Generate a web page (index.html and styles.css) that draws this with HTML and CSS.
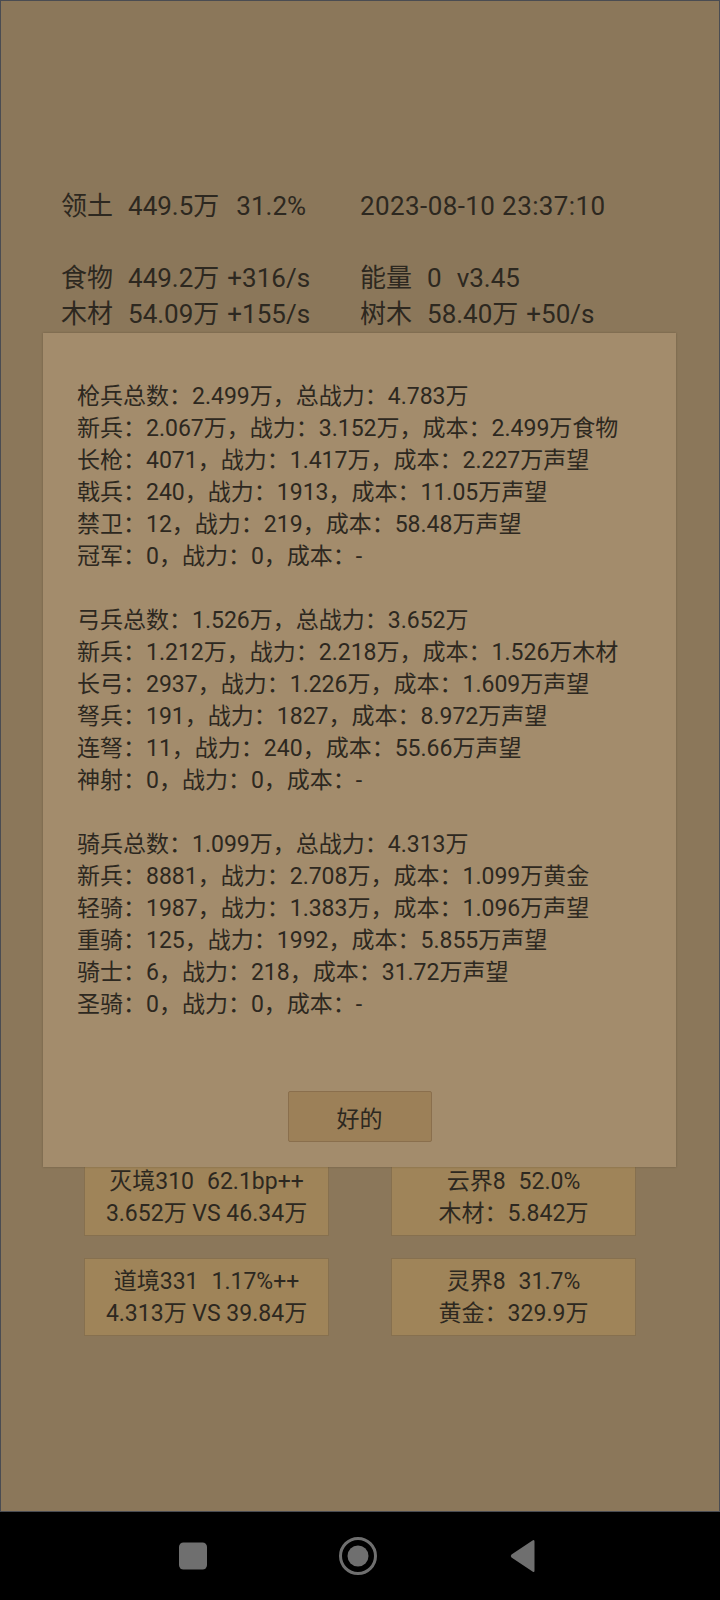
FILE: index.html
```html
<!DOCTYPE html>
<html lang="zh">
<head>
<meta charset="utf-8">
<title>兵力</title>
<link rel="stylesheet" href="styles.css">
</head>
<body>
<div class="screen">
  <div class="app">
    <div class="stats">
      <div class="stat-row">
        <div class="col"><span class="gap">领土</span><span class="gap2">449.5万</span><span>31.2%</span></div>
        <div class="col"><span class="date">2023-08-10 23:37:10</span></div>
      </div>
      <div class="stat-row blank"></div>
      <div class="stat-row">
        <div class="col"><span class="gap">食物</span><span class="sp">449.2万</span><span>+316/s</span></div>
        <div class="col"><span class="gap">能量</span><span class="gap">0</span><span>v3.45</span></div>
      </div>
      <div class="stat-row">
        <div class="col"><span class="gap">木材</span><span class="sp">54.09万</span><span>+155/s</span></div>
        <div class="col"><span class="gap">树木</span><span class="sp">58.40万</span><span>+50/s</span></div>
      </div>
    </div>

    <div class="cards">
      <div class="card"><div><span class="cgap">灭境310</span>62.1bp++</div><div>3.652万 VS 46.34万</div></div>
      <div class="card"><div><span class="cgap">云界8</span>52.0%</div><div>木材：5.842万</div></div>
      <div class="card"><div><span class="cgap">道境331</span>1.17%++</div><div>4.313万 VS 39.84万</div></div>
      <div class="card"><div><span class="cgap">灵界8</span>31.7%</div><div>黄金：329.9万</div></div>
    </div>

    <div class="dialog">
      <div class="dialog-text">
        <p>枪兵总数：2.499万，总战力：4.783万</p>
        <p>新兵：2.067万，战力：3.152万，成本：2.499万食物</p>
        <p>长枪：4071，战力：1.417万，成本：2.227万声望</p>
        <p>戟兵：240，战力：1913，成本：11.05万声望</p>
        <p>禁卫：12，战力：219，成本：58.48万声望</p>
        <p>冠军：0，战力：0，成本：-</p>
        <p class="empty"></p>
        <p>弓兵总数：1.526万，总战力：3.652万</p>
        <p>新兵：1.212万，战力：2.218万，成本：1.526万木材</p>
        <p>长弓：2937，战力：1.226万，成本：1.609万声望</p>
        <p>弩兵：191，战力：1827，成本：8.972万声望</p>
        <p>连弩：11，战力：240，成本：55.66万声望</p>
        <p>神射：0，战力：0，成本：-</p>
        <p class="empty"></p>
        <p>骑兵总数：1.099万，总战力：4.313万</p>
        <p>新兵：8881，战力：2.708万，成本：1.099万黄金</p>
        <p>轻骑：1987，战力：1.383万，成本：1.096万声望</p>
        <p>重骑：125，战力：1992，成本：5.855万声望</p>
        <p>骑士：6，战力：218，成本：31.72万声望</p>
        <p>圣骑：0，战力：0，成本：-</p>
      </div>
      <div class="dialog-actions">
        <button class="ok-btn" type="button">好的</button>
      </div>
    </div>
  </div>

  <nav class="navbar">
    <svg class="nav-icon" width="40" height="40" viewBox="0 0 40 40"><rect x="6" y="6.5" width="28" height="27" rx="4.5" fill="#6f6f6f"/></svg>
    <svg class="nav-icon" width="40" height="40" viewBox="0 0 40 40"><circle cx="20" cy="20" r="17.5" fill="none" stroke="#6f6f6f" stroke-width="3"/><circle cx="20" cy="20" r="10.5" fill="#6f6f6f"/></svg>
    <svg class="nav-icon" width="40" height="40" viewBox="0 0 40 40"><path d="M31.5 5.5 L31.5 34.5 Q31.5 37 29.5 35.5 L8.5 21.5 Q7 20 8.5 18.5 L29.5 4.5 Q31.5 3 31.5 5.5 Z" fill="#6f6f6f"/></svg>
  </nav>
</div>
</body>
</html>
```

FILE: styles.css
```css
html, body {
  margin: 0;
  padding: 0;
  background: #000;
}

body {
  font-family: "Roboto", "Noto Sans CJK SC", sans-serif;
  color: #2d2820;
}

.screen {
  width: 720px;
  height: 1600px;
  display: flex;
  flex-direction: column;
  overflow: hidden;
}

.app {
  position: relative;
  height: 1512px;
  box-sizing: border-box;
  background: #8b775a;
  border: 1px solid #4a4c52;
}

.stats {
  padding: 187px 0 0 60px;
  font-size: 26px;
  line-height: 36px;
}

.stat-row {
  display: grid;
  grid-template-columns: 299px 1fr;
  height: 36px;
  white-space: nowrap;
}

.gap {
  margin-right: 15px;
}

.gap2 {
  margin-right: 17px;
}

.sp {
  margin-right: 8px;
}

.date {
  letter-spacing: 0.4px;
}

.cards {
  margin: 826px 0 0 83px;
  width: 552px;
  display: grid;
  grid-template-columns: 245px 245px;
  column-gap: 62px;
  row-gap: 22px;
}

.card {
  height: 78px;
  box-sizing: border-box;
  padding: 7px 0;
  background: #9f8459;
  border: 1px solid #86704f;
  text-align: center;
  font-size: 23px;
  line-height: 32px;
  white-space: nowrap;
}

.cgap {
  margin-right: 13px;
}

.dialog {
  position: absolute;
  left: 42px;
  top: 332px;
  width: 633px;
  height: 834px;
  box-sizing: border-box;
  background: #a38c6c;
  box-shadow: 0 0 2px rgba(60, 45, 25, 0.35);
  padding: 48px 0 0 34px;
  display: flex;
  flex-direction: column;
}

.dialog-text p {
  margin: 0;
  font-size: 23px;
  line-height: 32px;
  height: 32px;
  white-space: nowrap;
}

.dialog-actions {
  display: flex;
  justify-content: center;
  margin-top: 70px;
  padding-right: 34px;
}

.ok-btn {
  width: 144px;
  height: 51px;
  background: #9c8058;
  border: 1px solid #8a6f4d;
  border-radius: 2px;
  font-family: "Roboto", "Noto Sans CJK SC", sans-serif;
  font-size: 23px;
  color: #2d2820;
  padding: 0;
}

.navbar {
  flex: 1;
  background: #000;
  display: flex;
  align-items: center;
  justify-content: center;
  gap: 125px;
  padding: 0 4px 0 0;
}

.nav-icon {
  display: block;
}
```
